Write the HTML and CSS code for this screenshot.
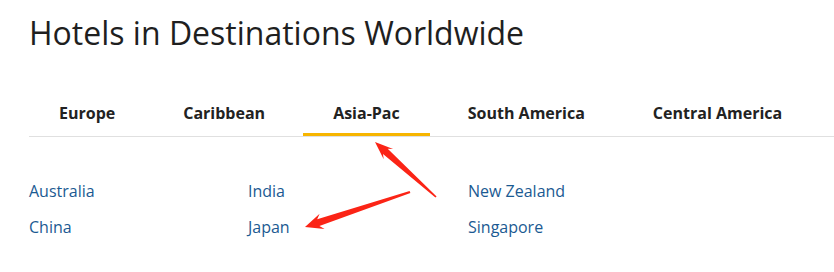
FILE: index.html
```html
<!DOCTYPE html>
<html lang="en">
<head>
    <meta charset="UTF-8">
    <title>Hotels in Destinations Worldwide</title>
    <link rel="stylesheet" href="styles.css">
</head>
<body>
    <div class="page">
        <h1 class="title">Hotels in Destinations Worldwide</h1>

        <ul class="tabs">
            <li class="tab">Europe</li>
            <li class="tab">Caribbean</li>
            <li class="tab active">Asia-Pac</li>
            <li class="tab">South America</li>
            <li class="tab">Central America</li>
        </ul>

        <div class="links">
            <a href="#">Australia</a>
            <a href="#">India</a>
            <a href="#">New Zealand</a>
            <a href="#">China</a>
            <a href="#">Japan</a>
            <a href="#">Singapore</a>
        </div>
    </div>

    <!-- annotation arrows -->
    <svg class="arrows" width="834" height="272" viewBox="0 0 834 272">
        <polygon points="375,142 393.1,148.9 387.7,148.8 436.6,196.4 435.4,197.6 383.0,154.0 383.7,159.3" />
        <polygon points="305,227 319.6,213.7 317.2,219.3 409.6,190.9 410.4,193.1 319.4,225.9 324.6,228.9" />
    </svg>
</body>
</html>
```

FILE: styles.css
```css
* {
    margin: 0;
    padding: 0;
    box-sizing: border-box;
}

body {
    font-family: "Open Sans", Arial, sans-serif;
    background: #fff;
    color: #222;
    position: relative;
    overflow: hidden;
    width: 834px;
    height: 272px;
}

.page {
    padding: 11px 0 0 29px;
}

.title {
    font-size: 32px;
    font-weight: 400;
    line-height: 44px;
    color: #1f1f1f;
}

.tabs {
    list-style: none;
    display: flex;
    gap: 8px;
    margin-top: 45px;
    border-bottom: 1px solid #e0e0e0;
}

.tab {
    padding: 2px 30px 0;
    font-size: 16px;
    font-weight: 700;
    line-height: 22px;
    height: 36px;
    color: #222;
    border-bottom: 3px solid transparent;
}

.tab.active {
    border-bottom-color: #f7b500;
}

.links {
    display: grid;
    grid-template-columns: 219px 220px 220px;
    grid-auto-rows: 36px;
    padding-top: 43px;
}

.links a {
    font-size: 16px;
    line-height: 22px;
    color: #1b5a92;
    text-decoration: none;
}

.arrows {
    position: absolute;
    top: 0;
    left: 0;
    fill: #fb2416;
}
```
